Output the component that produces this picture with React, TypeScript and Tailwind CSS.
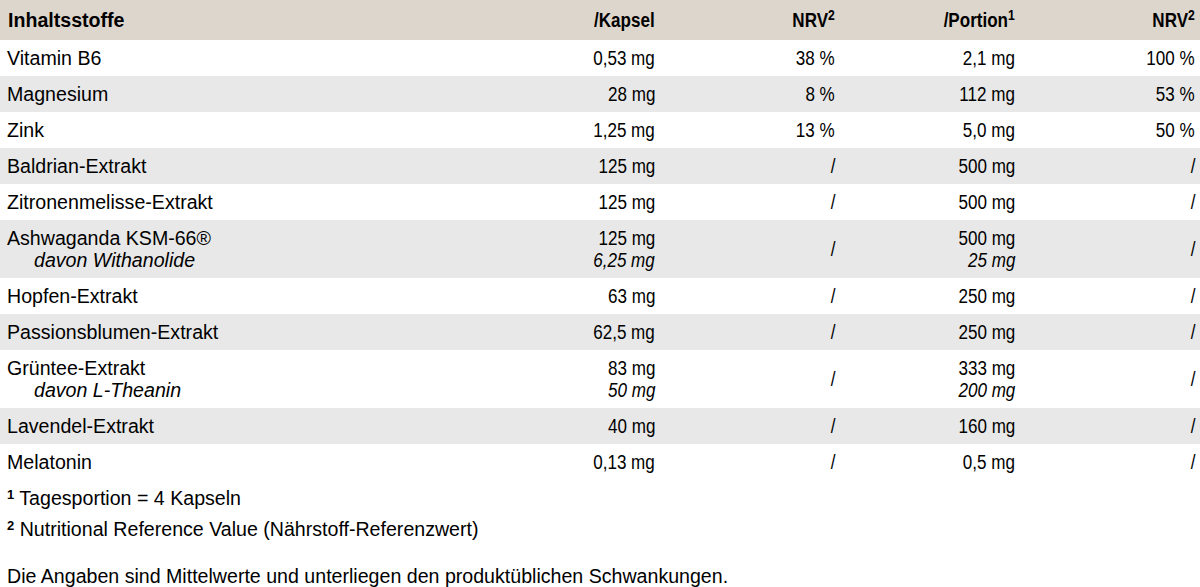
type Row = {
	name: string;
	sub?: string;
	kapsel: string;
	kapselSub?: string;
	nrv1: string;
	portion: string;
	portionSub?: string;
	nrv2: string;
};

const rows: Row[] = [
	{ name: "Vitamin B6", kapsel: "0,53 mg", nrv1: "38 %", portion: "2,1 mg", nrv2: "100 %" },
	{ name: "Magnesium", kapsel: "28 mg", nrv1: "8 %", portion: "112 mg", nrv2: "53 %" },
	{ name: "Zink", kapsel: "1,25 mg", nrv1: "13 %", portion: "5,0 mg", nrv2: "50 %" },
	{ name: "Baldrian-Extrakt", kapsel: "125 mg", nrv1: "/", portion: "500 mg", nrv2: "/" },
	{ name: "Zitronenmelisse-Extrakt", kapsel: "125 mg", nrv1: "/", portion: "500 mg", nrv2: "/" },
	{
		name: "Ashwaganda KSM-66®",
		sub: "davon Withanolide",
		kapsel: "125 mg",
		kapselSub: "6,25 mg",
		nrv1: "/",
		portion: "500 mg",
		portionSub: "25 mg",
		nrv2: "/",
	},
	{ name: "Hopfen-Extrakt", kapsel: "63 mg", nrv1: "/", portion: "250 mg", nrv2: "/" },
	{ name: "Passionsblumen-Extrakt", kapsel: "62,5 mg", nrv1: "/", portion: "250 mg", nrv2: "/" },
	{
		name: "Grüntee-Extrakt",
		sub: "davon L-Theanin",
		kapsel: "83 mg",
		kapselSub: "50 mg",
		nrv1: "/",
		portion: "333 mg",
		portionSub: "200 mg",
		nrv2: "/",
	},
	{ name: "Lavendel-Extrakt", kapsel: "40 mg", nrv1: "/", portion: "160 mg", nrv2: "/" },
	{ name: "Melatonin", kapsel: "0,13 mg", nrv1: "/", portion: "0,5 mg", nrv2: "/" },
];

// condensed look for the number columns (no narrow face installed)
const narrow = "inline-block origin-right scale-x-[0.87]";

function NumCell({ main, sub }: { main: string; sub?: string }) {
	return (
		<div className="flex flex-col items-end justify-center pr-[5px]">
			<span className={narrow}>{main}</span>
			{sub && <span className={`${narrow} italic`}>{sub}</span>}
		</div>
	);
}

function HeadCell({ label, note }: { label: string; note?: string }) {
	return (
		<div className="text-right pr-[5px]">
			<span className={narrow}>
				{label}
				{note && <sup className="text-[14px]">{note}</sup>}
			</span>
		</div>
	);
}

export default function App() {
	return (
		<div className="font-['Liberation_Sans',Arial,sans-serif] w-[1200px] h-[587px] bg-white text-[19.6px] leading-[22px] text-black">
			<div className="grid grid-cols-[480px_180px_180px_180px_180px] bg-[#ddd6cc] py-[9px] font-bold">
				<div className="pl-[8px]">Inhaltsstoffe</div>
				<HeadCell label="/Kapsel" />
				<HeadCell label="NRV" note="2" />
				<HeadCell label="/Portion" note="1" />
				<HeadCell label="NRV" note="2" />
			</div>
			{rows.map((r, i) => (
				<div
					key={r.name}
					className={`grid grid-cols-[480px_180px_180px_180px_180px] py-[7px] ${
						i % 2 === 1 ? "bg-[#e8e8e8]" : "bg-white"
					}`}
				>
					<div className="flex flex-col pl-[7px]">
						<span>{r.name}</span>
						{r.sub && <span className="italic pl-[27px]">{r.sub}</span>}
					</div>
					<NumCell main={r.kapsel} sub={r.kapselSub} />
					<NumCell main={r.nrv1} />
					<NumCell main={r.portion} sub={r.portionSub} />
					<NumCell main={r.nrv2} />
				</div>
			))}
			<div className="pl-[7px] pt-[7px]">
				<p>
					<sup className="font-bold text-[13px]">1</sup> Tagesportion = 4 Kapseln
				</p>
				<p className="mt-[9px]">
					<sup className="font-bold text-[13px]">2</sup> Nutritional Reference Value
					(Nährstoff-Referenzwert)
				</p>
				<p className="mt-[25px]">
					Die Angaben sind Mittelwerte und unterliegen den produktüblichen Schwankungen.
				</p>
			</div>
		</div>
	);
}
